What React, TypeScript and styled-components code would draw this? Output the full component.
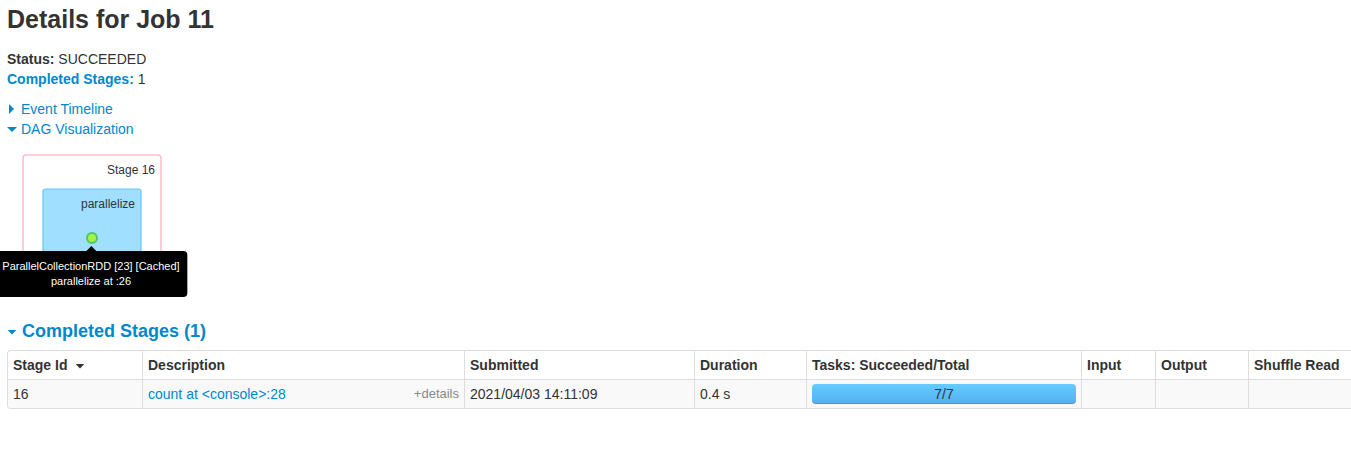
import React from "react";
import styled, { createGlobalStyle } from "styled-components";

const GlobalStyle = createGlobalStyle`
  *, *::before, *::after { box-sizing: border-box; }
  body {
    margin: 0;
    overflow-x: hidden;
    background: #fff;
    color: #333;
    font: 14px/20px "Helvetica Neue", Helvetica, "Liberation Sans", Arial, sans-serif;
  }
`;

const Page = styled.main`
  padding: 0 0 20px 7px;
`;

const Title = styled.h1`
  margin: 0 0 10px;
  font-size: 25px;
  line-height: 39px;
`;

const Summary = styled.ul`
  list-style: none;
  margin: 0 0 10px;
  padding: 0;
`;

const Link = styled.a`
  color: #0088cc;
  text-decoration: none;
  &:hover { text-decoration: underline; }
`;

const Toggle = styled.button`
  display: flex;
  align-items: center;
  gap: 4px;
  padding: 0;
  border: 0;
  background: none;
  color: #0088cc;
  font: inherit;
  cursor: pointer;
`;

const SectionTitle = styled.h2`
  margin: 20px 0 9px;
  font-size: 18px;
  line-height: 20px;
`;

const SectionToggle = styled(Toggle)`
  gap: 5px;
`;

const Arrow = styled.svg`
  display: block;
  flex: none;
  width: 10px;
  height: 10px;
  fill: currentColor;
`;

const Graph = styled.div`
  position: relative;
  height: 162px;
`;

const Drawing = styled.svg`
  display: block;
  font-size: 12px;
`;

const Tooltip = styled.div`
  position: absolute;
  top: 112px;
  left: 84px;
  transform: translateX(-50%);
  padding: 8px;
  border-radius: 4px;
  background: #000;
  color: #fff;
  font-size: 11px;
  line-height: 15px;
  text-align: center;
  white-space: nowrap;
  &::before {
    content: "";
    position: absolute;
    top: -5px;
    left: 50%;
    margin-left: -5px;
    border: 5px solid transparent;
    border-top: 0;
    border-bottom-color: #000;
  }
`;

const StageTable = styled.table`
  width: 100%;
  table-layout: fixed;
  border: 1px solid #ddd;
  border-right: 0;
  border-collapse: separate;
  border-spacing: 0;
  border-radius: 4px 0 0 4px;
  overflow: hidden;
`;

const Col = styled.col<{ $width?: number }>`
  width: ${({ $width }) => ($width ? `${$width}px` : "auto")};
`;

const HeadCell = styled.th`
  padding: 4px 5px;
  text-align: left;
  white-space: nowrap;
  & + & { border-left: 1px solid #ddd; }
`;

const Cell = styled.td`
  padding: 4px 5px;
  border-top: 1px solid #ddd;
  background: #f9f9f9;
  & + & { border-left: 1px solid #ddd; }
`;

const SortButton = styled(Toggle)`
  gap: 8px;
  color: inherit;
`;

const Description = styled.div`
  display: flex;
  justify-content: space-between;
`;

const DetailsButton = styled.button`
  padding: 0;
  border: 0;
  background: none;
  color: #888;
  font: inherit;
  font-size: 13px;
  cursor: pointer;
`;

const Progress = styled.div`
  height: 20px;
  border-radius: 4px;
  background: linear-gradient(#64cbff, #54b0f0);
  box-shadow: inset 0 -1px 0 rgba(0, 0, 0, 0.15);
  text-align: center;
`;

const ArrowDown = () => (
  <Arrow viewBox="0 0 10 10" aria-hidden="true"><path d="M0 3h10L5 8z" /></Arrow>
);
const SmallArrowDown = () => (
  <Arrow viewBox="0 0 10 10" aria-hidden="true"><path d="M.7 4h8.6L5 8.4z" /></Arrow>
);
const ArrowRight = () => (
  <Arrow viewBox="0 0 10 10" aria-hidden="true"><path d="M2 0v10l5-5z" /></Arrow>
);

const columns: { label: string; width?: number }[] = [
  { label: "Stage Id", width: 134 },
  { label: "Description" },
  { label: "Submitted", width: 230 },
  { label: "Duration", width: 112 },
  { label: "Tasks: Succeeded/Total", width: 275 },
  { label: "Input", width: 74 },
  { label: "Output", width: 93 },
  { label: "Shuffle Read", width: 103 },
];

export default function App() {
  return (
    <>
      <GlobalStyle />
      <Page>
        <Title>Details for Job 11</Title>
        <Summary>
          <li><strong>Status:</strong> SUCCEEDED</li>
          <li><Link href="#completed"><strong>Completed Stages:</strong></Link> 1</li>
        </Summary>
        <Toggle type="button" aria-expanded="false"><ArrowRight />Event Timeline</Toggle>
        <Toggle type="button" aria-expanded="true"><ArrowDown />DAG Visualization</Toggle>
        <Graph>
          <Drawing width="180" height="150" role="img" aria-label="Stage 16">
            <rect x="16" y="16" width="138" height="130" rx="3" fill="#fff" stroke="#ffc0cb" strokeWidth="1.6" />
            <text x="148" y="35" textAnchor="end" fill="#333">Stage 16</text>
            <rect x="36" y="50" width="98" height="80" rx="3" fill="#a0dfff" stroke="#63c6f5" strokeWidth="1.2" />
            <text x="128" y="69" textAnchor="end" fill="#333">parallelize</text>
            <circle cx="85" cy="99" r="5" fill="#a3f545" stroke="#52c366" strokeWidth="2" />
          </Drawing>
          <Tooltip role="tooltip">
            ParallelCollectionRDD [23] [Cached]<br />parallelize at :26
          </Tooltip>
        </Graph>
        <SectionTitle id="completed">
          <SectionToggle type="button" aria-expanded="true"><SmallArrowDown />Completed Stages (1)</SectionToggle>
        </SectionTitle>
        <StageTable>
          <colgroup>
            {columns.map((c) => <Col key={c.label} $width={c.width} />)}
          </colgroup>
          <thead>
            <tr>
              {columns.map((c, i) => (
                <HeadCell key={c.label} scope="col">
                  {i === 0 ? <SortButton type="button">{c.label}<SmallArrowDown /></SortButton> : c.label}
                </HeadCell>
              ))}
            </tr>
          </thead>
          <tbody>
            <tr>
              <Cell>16</Cell>
              <Cell>
                <Description>
                  <Link href="#stage-16">count at &lt;console&gt;:28</Link>
                  <DetailsButton type="button">+details</DetailsButton>
                </Description>
              </Cell>
              <Cell>2021/04/03 14:11:09</Cell>
              <Cell>0.4 s</Cell>
              <Cell><Progress>7/7</Progress></Cell>
              <Cell />
              <Cell />
              <Cell />
            </tr>
          </tbody>
        </StageTable>
      </Page>
    </>
  );
}
